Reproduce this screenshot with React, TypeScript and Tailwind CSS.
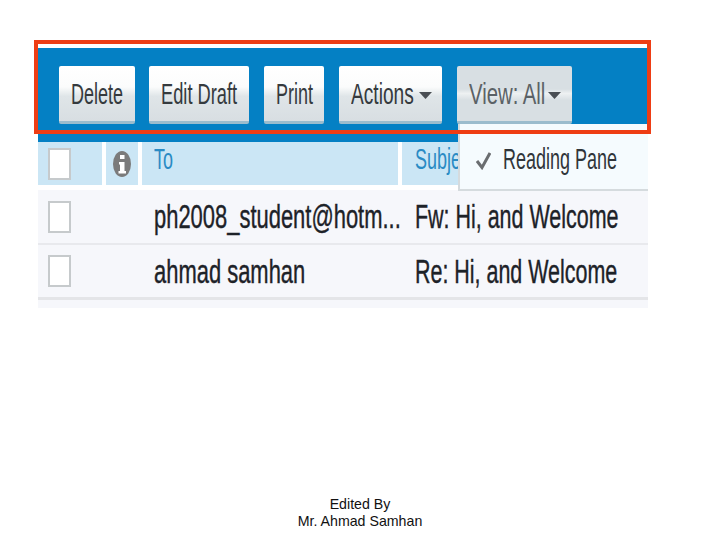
const font = "font-['Liberation_Sans',Arial,sans-serif]";

function Squeezed({ text, className }: { text: string; className: string }) {
  return (
    <span
      className={`inline-block origin-left whitespace-nowrap ${className}`}
    >
      {text}
    </span>
  );
}

function Caret({ className }: { className: string }) {
  return (
    <svg width="13" height="7" viewBox="0 0 13 7" className={`shrink-0 ${className}`}>
      <path d="M0 0h13L6.5 7z" fill="#4a4f54" />
    </svg>
  );
}

function ToolButton({
  label,
  width,
  scale = "scale-x-[.62]",
  caret,
  active,
}: {
  label: string;
  width: string;
  scale?: string;
  caret?: string;
  active?: boolean;
}) {
  return (
    <div
      className={`flex h-[58px] shrink-0 items-center rounded-[2px] border-b-[3px] border-[#9bbccd] pl-3 pt-[4px] ${width} ${
        active
          ? "bg-[linear-gradient(#d8dfe3_0%,#d8dfe3_42%,#eef1f2_50%,#d8dfe3_62%,#d8dfe3_100%)]"
          : "bg-[linear-gradient(#ffffff_0%,#fbfcfc_38%,#dfe5e8_55%,#d8dee2_100%)]"
      }`}
    >
      <div className="w-0">
        <Squeezed
          text={label}
          className={`text-[29px] leading-none ${scale} ${active ? "text-[#5b6266]" : "text-[#353a3e]"}`}
        />
      </div>
      {caret && <Caret className={caret} />}
    </div>
  );
}

function Checkbox({ className }: { className: string }) {
  return (
    <div
      className={`h-[32px] w-[23px] shrink-0 border-2 border-[#c6cacc] bg-white ${className}`}
    />
  );
}

function MailRow({
  to,
  subject,
  rule,
}: {
  to: string;
  subject: string;
  rule: string;
}) {
  const text =
    "text-[33px] leading-none text-[#1d2228] [-webkit-text-stroke:0.4px_#1d2228]";
  return (
    <div className={`flex h-[55px] items-center bg-[#f6f7fb] ${rule}`}>
      <Checkbox className="ml-[10px]" />
      <div className="ml-[83px] w-[261px] shrink-0 pt-[2px]">
        <div className="w-0">
          <Squeezed text={to} className={`scale-x-[.665] ${text}`} />
        </div>
      </div>
      <div className="w-0 pt-[2px]">
        <Squeezed text={subject} className={`scale-x-[.65] ${text}`} />
      </div>
    </div>
  );
}

export default function App() {
  return (
    <div className={`flex h-[540px] w-[720px] flex-col bg-white ${font}`}>
      <div className="relative ml-[38px] mt-[48px] w-[610px]">
        <div className="flex h-[94px] items-start gap-[15px] bg-[#0480c4] pl-[21px] pt-[18px]">
          <ToolButton label="Delete" width="w-[76px]" />
          <ToolButton label="Edit Draft" width="-ml-px w-[100px]" scale="scale-x-[.63]" />
          <ToolButton label="Print" width="w-[60px]" />
          <ToolButton label="Actions" width="w-[103px]" scale="scale-x-[.66]" caret="ml-[68px]" />
          <ToolButton label="View: All" width="w-[115px]" scale="scale-x-[.70]" caret="ml-[79px]" active />
        </div>

        <div className="flex h-[43px] gap-[4px] text-[#2a8bc4]">
          <div className="flex w-[64px] items-center bg-[#cbe6f5] pl-[10px]">
            <Checkbox className="" />
          </div>
          <div className="flex w-[32px] items-center justify-center bg-[#cbe6f5]">
            <svg width="18" height="26" viewBox="0 0 18 26">
              <ellipse cx="9" cy="13" rx="9" ry="13" fill="#7b7b7b" />
              <rect x="7" y="4" width="4.5" height="4" fill="#fff" />
              <path d="M6 11h5.5v9H13v2.500H5.500V20H7v-6.500H6z" fill="#fff" />
            </svg>
          </div>
          <div className="w-[256px] bg-[#cbe6f5] pl-[12px] pt-[1px]">
            <Squeezed text="To" className="scale-x-[.62] text-[29px] leading-[32px]" />
          </div>
          <div className="flex-1 bg-[#cbe6f5] pl-[13px] pt-[1px]">
            <Squeezed text="Subject" className="scale-x-[.62] text-[29px] leading-[32px]" />
          </div>
        </div>

        <div className="h-[5px]" />
        <MailRow
          to="ph2008_student@hotm..."
          subject="Fw: Hi, and Welcome"
          rule="border-b-[2px] border-[#e8e9ed]"
        />
        <MailRow
          to="ahmad samhan"
          subject="Re: Hi, and Welcome"
          rule="border-b-[3px] border-[#e4e5e8]"
        />
        <div className="h-[8px] bg-[#f6f7fb]" />

        <div className="absolute left-[420px] top-[76px] flex h-[67px] w-[190px] items-center border-b-2 border-l-2 border-[#d5dbde] bg-[#f5fbfe] pl-[16px] pt-[8px]">
          <svg width="15" height="18" viewBox="0 0 15 18" className="shrink-0">
            <path d="M1 9l5 6.500L14 1" fill="none" stroke="#6a6d70" strokeWidth="3" />
          </svg>
          <div className="ml-[12px] w-0">
            <Squeezed
              text="Reading Pane"
              className="scale-x-[.62] text-[29px] leading-none text-[#30353a]"
            />
          </div>
        </div>

        <div className="absolute -left-[4px] -top-[8px] h-[94px] w-[617px] border-[4px] border-[#ee3d14]" />
      </div>

      <div className="mb-[10px] mt-auto text-center text-[14.2px] leading-[17px] text-[#111]">
        <p>Edited By</p>
        <p>Mr. Ahmad Samhan</p>
      </div>
    </div>
  );
}
